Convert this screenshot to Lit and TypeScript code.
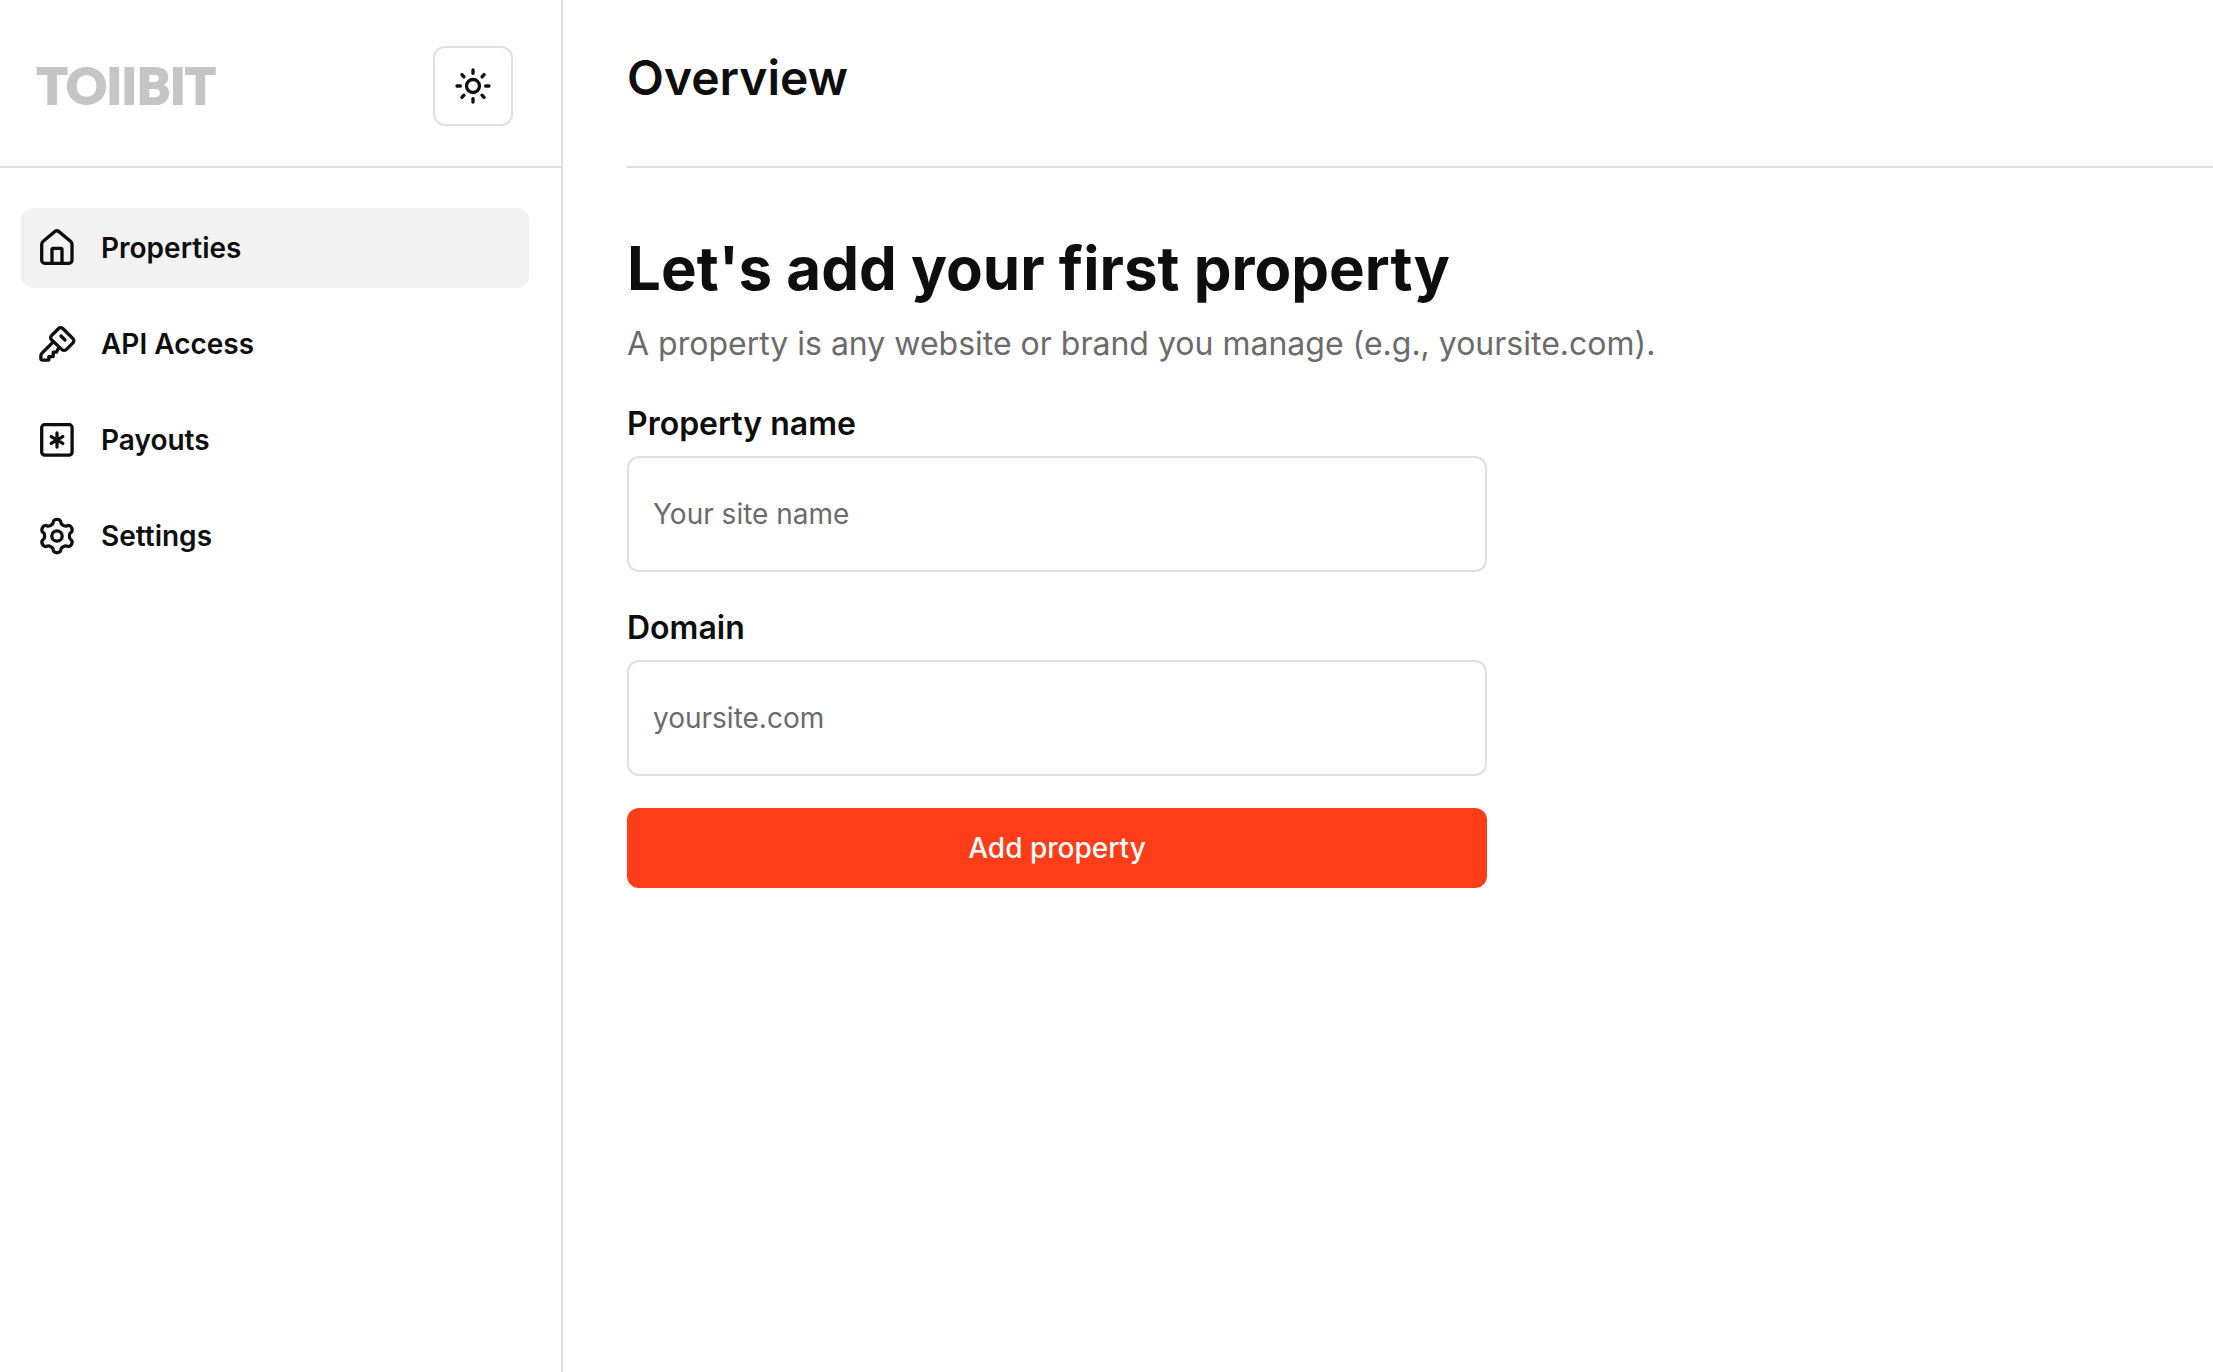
import { LitElement, html, css, svg } from "lit";
import { customElement, state } from "lit/decorators.js";
import { classMap } from "lit/directives/class-map.js";

// Outline of a six-toothed gear centred on (20, 20).
const gearPath = (): string => {
  const at = (x: number, y: number, k: number) => {
    const a = (k * Math.PI) / 3;
    const px = 20 + x * Math.cos(a) - y * Math.sin(a);
    const py = 20 + x * Math.sin(a) + y * Math.cos(a);
    return `${px.toFixed(2)} ${py.toFixed(2)}`;
  };
  let d = `M${at(-6.2, -10.74, 0)}`;
  for (let k = 0; k < 6; k++) {
    d += `C${at(-4.8, -11.5, k)} ${at(-3.8, -12, k)} ${at(-3.8, -13.8, k)}`;
    d += `C${at(-3.8, -17.7, k)} ${at(3.8, -17.7, k)} ${at(3.8, -13.8, k)}`;
    d += `C${at(3.8, -12, k)} ${at(4.8, -11.5, k)} ${at(6.2, -10.74, k)}`;
  }
  return d + "Z";
};

const icons = {
  home: svg`
    <path d="M4.7 16.4a4 4 0 0 1 1.5-3.1L17.9 3.6a3.2 3.2 0 0 1 4 0L33.5 13.3a4 4 0 0 1 1.5 3.1V32.3a3 3 0 0 1-3 3H7.7a3 3 0 0 1-3-3Z"/>
    <path d="M15 35V21.5a1.2 1.2 0 0 1 1.2-1.2h7.6a1.2 1.2 0 0 1 1.2 1.2V35"/>`,
  key: svg`
    <path d="M21.6 4.5a3 3 0 0 1 4.2 0L36 14.6a3 3 0 0 1 0 4.2L29.2 25.6a3 3 0 0 1-4.2 0L14.5 15.8a3 3 0 0 1 0-4.2Z"/>
    <path d="M24 12l4 4"/>
    <path d="M16 18.2L4.8 29.4a3 3 0 0 0-.9 2.1v3.1a1.5 1.5 0 0 0 1.5 1.5H11.8V32.6h4.4V28.2h3.2L21.6 24"/>`,
  payouts: svg`
    <rect x="4.7" y="4.7" width="30.4" height="30.4" rx="3"/>
    <path d="M20 13v14M14.2 16.6l11.6 6.8M25.8 16.6l-11.6 6.8"/>`,
  settings: svg`<path d=${gearPath()}/><circle cx="20" cy="20" r="5.2"/>`,
  sun: svg`
    <circle cx="20" cy="20" r="6.5"/>
    <path d="M20 4v3.4M20 32.6V36M4 20h3.4M32.6 20H36M8.9 8.6l2.1 2.3M31.1 8.6l-2.1 2.3M8.9 31.4l2.1-2.2M31.1 31.4l-2.1-2.2"/>`,
};

type IconName = keyof typeof icons;

const icon = (name: IconName) => html`
  <svg class="icon" viewBox="0 0 40 40" aria-hidden="true">${icons[name]}</svg>
`;

const NAV: { label: string; icon: IconName }[] = [
  { label: "Properties", icon: "home" },
  { label: "API Access", icon: "key" },
  { label: "Payouts", icon: "payouts" },
  { label: "Settings", icon: "settings" },
];

@customElement("app-root")
export class AppRoot extends LitElement {
  @state() private active = "Properties";

  static styles = css`
    :host {
      display: grid;
      grid-template-columns: 563px minmax(0, 1fr);
      min-height: 100vh;
      background: #fff;
      color: #0e0e0e;
      font-family: Inter, "Liberation Sans", sans-serif;
      font-size: 28px;
      line-height: 40px;
    }
    * {
      box-sizing: border-box;
    }
    .sidebar {
      border-right: 2px solid #e0e0e0;
    }
    .brand {
      display: flex;
      align-items: center;
      justify-content: space-between;
      height: 168px;
      padding: 6px 48px 0 37px;
      border-bottom: 2px solid #e0e0e0;
    }
    .logo {
      padding-bottom: 2px;
      color: #c5c5c5;
      font-family: Lato, sans-serif;
      font-size: 50px;
      font-weight: 900;
      line-height: 56px;
      text-decoration: none;
      -webkit-text-stroke: 2px #c5c5c5;
    }
    .icon {
      flex: none;
      display: block;
      width: 40px;
      height: 40px;
      fill: none;
      stroke: currentColor;
      stroke-width: 3.3;
      stroke-linecap: round;
      stroke-linejoin: round;
    }
    .theme {
      display: grid;
      place-items: center;
      width: 80px;
      height: 80px;
      padding: 0;
      border: 2px solid #e0e0e0;
      border-radius: 12px;
      background: #fff;
      color: inherit;
    }
    .nav {
      display: flex;
      flex-direction: column;
      gap: 16px;
      padding: 40px 32px 40px 21px;
    }
    .item {
      display: flex;
      align-items: center;
      gap: 24px;
      height: 80px;
      padding: 0 16px;
      border-radius: 12px;
      color: inherit;
      font-weight: 600;
      text-decoration: none;
    }
    .item.active {
      background: #f2f2f2;
    }
    .main {
      padding-left: 64px;
    }
    .header {
      height: 168px;
      padding-top: 50px;
      border-bottom: 2px solid #e0e0e0;
    }
    .title {
      margin: 0;
      font-size: 48px;
      font-weight: 600;
      line-height: 56px;
    }
    .content {
      padding: 64px 64px 64px 0;
    }
    .heading {
      margin: 0 0 16px;
      font-size: 60px;
      font-weight: 700;
      line-height: 72px;
    }
    .lead {
      margin: 0 0 40px;
      color: #6b6b6b;
      font-size: 32px;
      line-height: 48px;
    }
    .form {
      display: flex;
      flex-direction: column;
      gap: 32px;
      max-width: 860px;
    }
    .fields {
      display: flex;
      flex-direction: column;
      gap: 40px;
    }
    .field {
      display: flex;
      flex-direction: column;
      gap: 16px;
    }
    .label {
      font-size: 32px;
      font-weight: 600;
      line-height: 32px;
    }
    .input {
      width: 100%;
      height: 116px;
      padding: 0 24px;
      border: 2px solid #e0e0e0;
      border-radius: 12px;
      background: #fff;
      color: inherit;
      font: inherit;
    }
    .input::placeholder {
      color: #6b6b6b;
      opacity: 1;
    }
    .submit {
      height: 80px;
      border: 0;
      border-radius: 12px;
      background: #ff3d19;
      color: #fff;
      font: inherit;
      font-weight: 500;
    }
  `;

  private select(event: Event, label: string) {
    event.preventDefault();
    this.active = label;
  }

  render() {
    return html`
      <aside class="sidebar">
        <div class="brand">
          <a class="logo" href="#">TOIIBIT</a>
          <button class="theme" type="button" aria-label="Toggle theme">${icon("sun")}</button>
        </div>
        <nav class="nav">
          ${NAV.map(
            (item) => html`
              <a
                class=${classMap({ item: true, active: item.label === this.active })}
                href="#"
                @click=${(e: Event) => this.select(e, item.label)}
                >${icon(item.icon)}<span>${item.label}</span></a
              >
            `
          )}
        </nav>
      </aside>
      <main class="main">
        <header class="header"><h1 class="title">Overview</h1></header>
        <section class="content">
          <h2 class="heading">Let's add your first property</h2>
          <p class="lead">A property is any website or brand you manage (e.g., yoursite.com).</p>
          <form class="form" @submit=${(e: Event) => e.preventDefault()}>
            <div class="fields">
              <div class="field">
                <label class="label" for="name">Property name</label>
                <input class="input" id="name" type="text" placeholder="Your site name" />
              </div>
              <div class="field">
                <label class="label" for="domain">Domain</label>
                <input class="input" id="domain" type="text" placeholder="yoursite.com" />
              </div>
            </div>
            <button class="submit" type="submit">Add property</button>
          </form>
        </section>
      </main>
    `;
  }
}
